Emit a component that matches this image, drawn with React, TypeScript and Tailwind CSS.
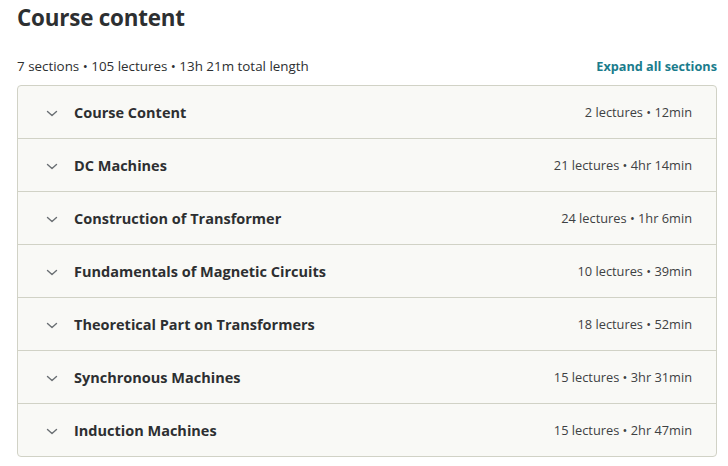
import React from 'react';

type Section = { title: string; lectures: number; length: string };

const sections: Section[] = [
  { title: 'Course Content', lectures: 2, length: '12min' },
  { title: 'DC Machines', lectures: 21, length: '4hr 14min' },
  { title: 'Construction of Transformer', lectures: 24, length: '1hr 6min' },
  { title: 'Fundamentals of Magnetic Circuits', lectures: 10, length: '39min' },
  { title: 'Theoretical Part on Transformers', lectures: 18, length: '52min' },
  { title: 'Synchronous Machines', lectures: 15, length: '3hr 31min' },
  { title: 'Induction Machines', lectures: 15, length: '2hr 47min' },
];

const Chevron: React.FC = () => (
  <svg width="16" height="16" viewBox="0 0 16 16" fill="none" className="shrink-0">
    <path d="M3.5 6.5 8 10.5 12.5 6.5" stroke="#6a6f73" strokeWidth="1.4" strokeLinecap="round" strokeLinejoin="round" />
  </svg>
);

const App: React.FC = () => {
  return (
    <div className="w-[728px] h-[466px] bg-white text-[#2d2f31] font-['Open_Sans',sans-serif] pl-[17px] pr-[11px] pt-[2px]">
      <h1 className="text-[22.4px] font-bold leading-[32px] tracking-[-0.2px]">Course content</h1>

      <div className="flex items-end justify-between mt-[24px] mb-[11px]">
        <p className="text-[13.4px] leading-[16px]">7 sections • 105 lectures • 13h 21m total length</p>
        <button className="text-[12.7px] font-bold text-[#1a7c8c] leading-[16px]">Expand all sections</button>
      </div>

      <div className="border border-[#d1d2c6] rounded-[4px] bg-[#f9f9f6] overflow-hidden divide-y divide-[#d1d2c6]">
        {sections.map((s) => (
          <div key={s.title} className="box-content flex items-center justify-between h-[51px] pt-[1px] pl-[26px] pr-[24px]">
            <div className="flex items-center gap-[14px]">
              <Chevron />
              <span className="text-[14.5px] font-bold">{s.title}</span>
            </div>
            <span className="text-[12.8px] text-[#3e4143]">
              {s.lectures} lectures • {s.length}
            </span>
          </div>
        ))}
      </div>
    </div>
  );
};

export default App;
